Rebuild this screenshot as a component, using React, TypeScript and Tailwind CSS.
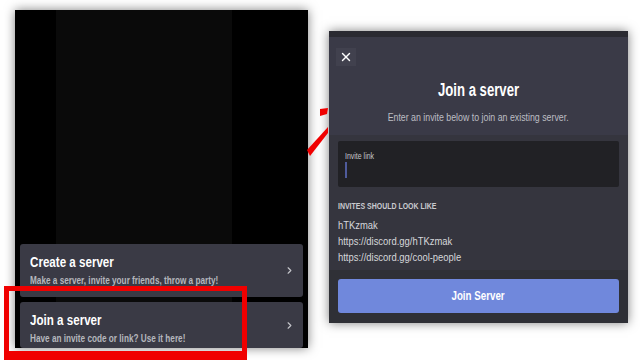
import React from "react";
import { ChevronRight, X } from "lucide-react";

const font = { fontFamily: '"Liberation Sans", Arial, sans-serif' };

function Card({ title, sub, h }: { title: string; sub: string; h: string }) {
  return (
    <div className={`${h} bg-[#3a3a45] rounded-[3px] flex items-center pl-[10px] pr-[8px]`}>
      <div className="flex-1 self-start pt-[10px]">
        <div className="text-[14.5px] leading-[16px] font-bold text-white whitespace-nowrap scale-x-[0.8] origin-left">{title}</div>
        <div className="text-[10px] leading-[12px] font-bold text-[#b5b7bd] mt-[5px] whitespace-nowrap scale-x-[0.82] origin-left">{sub}</div>
      </div>
      <ChevronRight size={11} strokeWidth={2.5} className="text-[#c4c5ca]" />
    </div>
  );
}

export default function App() {
  return (
    <div className="w-[640px] h-[360px] bg-white relative overflow-hidden flex items-start" style={font}>
      {/* Left phone screen */}
      <div className="ml-[15px] mt-[10px] w-[293px] h-[338px] shadow-[0_0_10px_rgba(0,0,0,0.5)] bg-[linear-gradient(to_right,#000_0,#000_41px,#0a0a0a_41px,#0a0a0a_217px,#000_217px)] flex flex-col justify-end gap-[5px] px-[5px]">
        <Card h="h-[53px]" title="Create a server" sub="Make a server, invite your friends, throw a party!" />
        <Card h="h-[46px]" title="Join a server" sub="Have an invite code or link? Use it here!" />
      </div>

      {/* Right modal */}
      <div className="ml-[21px] mt-[31px] w-[299px] h-[292px] shadow-[0_0_10px_rgba(0,0,0,0.5)] flex flex-col">
        <div className="h-[6px] bg-[#2a2a31]" />
        <div className="h-[98px] bg-[#3a3a47] flex flex-col items-center">
          <div className="self-start ml-[7px] mt-[11px] w-[20px] h-[18px] bg-[#41414e] flex items-center justify-center">
            <X size={14} strokeWidth={2.5} className="text-white" />
          </div>
          <div className="mt-[14px] text-[18px] leading-[20px] font-bold text-white whitespace-nowrap scale-x-[0.73]">Join a server</div>
          <div className="mt-[11px] text-[11px] leading-[12px] text-[#bdbec4] whitespace-nowrap scale-x-[0.8]">Enter an invite below to join an existing server.</div>
        </div>
        <div className="h-[135px] bg-[#35353e] px-[9px] pt-[6px]">
          <div className="h-[46px] bg-[#212125] rounded-[2px] pl-[7px] pt-[10px]">
            <div className="text-[8.5px] leading-[10px] text-[#c5c6cb] whitespace-nowrap scale-x-[0.82] origin-left">Invite link</div>
            <div className="mt-[1px] w-[2px] h-[16px] bg-[#4f5b9c]" />
          </div>
          <div className="mt-[14px] text-[8.5px] leading-[10px] font-bold text-[#c9cacf] whitespace-nowrap scale-x-[0.82] origin-left">INVITES SHOULD LOOK LIKE</div>
          <div className="mt-[6px] text-[11.5px] leading-[16px] text-[#d6d7db] whitespace-nowrap scale-x-[0.82] origin-left">
            <div>hTKzmak</div>
            <div>https://discord.gg/hTKzmak</div>
            <div>https://discord.gg/cool-people</div>
          </div>
        </div>
        <div className="flex-1 bg-[#2f3036] px-[9px] pt-[9px]">
          <div className="h-[34px] bg-[#7088dc] rounded-[3px] flex items-center justify-center">
            <span className="text-[12.5px] font-bold text-white whitespace-nowrap scale-x-[0.78]">Join Server</span>
          </div>
        </div>
      </div>

      {/* Red highlight box */}
      <div className="absolute left-[4px] top-[286px] w-[243px] h-[74px] border-[5px] border-b-[9px] border-[#f00000]" />

      {/* Red arrow fragments */}
      <svg className="absolute left-[300px] top-[100px]" width="35" height="65" viewBox="0 0 35 65">
        <polygon points="20,9 28,8 27,14 20,16" fill="#f00000" />
        <polygon points="7,50 28,27 28,33 10,56" fill="#f00000" />
      </svg>
    </div>
  );
}
